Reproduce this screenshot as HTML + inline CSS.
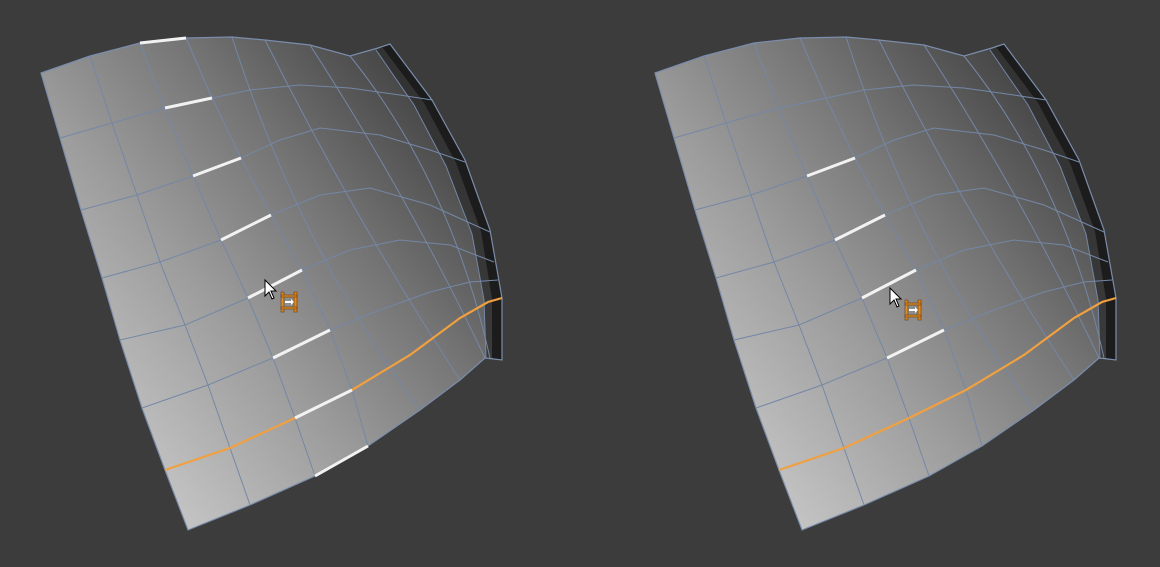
<!DOCTYPE html>
<html><head><meta charset="utf-8"><style>
html,body{margin:0;padding:0;background:#3c3c3c;width:1160px;height:567px;overflow:hidden}
svg{display:block}
</style></head><body>
<svg width="1160" height="567" viewBox="0 0 1160 567" xmlns="http://www.w3.org/2000/svg">
<defs>
<linearGradient id="g" gradientUnits="userSpaceOnUse" x1="100" y1="430" x2="470" y2="110">
<stop offset="0" stop-color="#c4c4c4"/><stop offset="0.35" stop-color="#9c9c9c"/><stop offset="0.65" stop-color="#747474"/><stop offset="0.85" stop-color="#555"/><stop offset="1" stop-color="#3e3e3e"/></linearGradient>
<g id="mesh">
<path d="M41,73 L90,56 L140,43 L186,38 L232,37 L265,40 L310,45 L350,56 L378,48 L390,44 L432,100 L465,160 L490,230 L502,298 L502,360 L485,358 L460,380 L420,410 L368,446 L315,476 L250,505 L188,530 L165,470 L142,408 L120,340 L102,278 L81,210 L60,138 Z" fill="url(#g)"/>
<path d="M382,47 L390,44 L432,100 L465,160 L490,230 L502,298 L502,360 L492,358 L492,300 L481,232 L456,163 L424,103 Z" fill="#1c1c1c"/>
<path d="M382,47 L424,103 L456,163 L481,232 L492,300 L492,358 L486,358 L484,300 L472,234 L446,166 L414,105 L376,50 Z" fill="#2e2e2e" opacity="0.8"/>
<g fill="none" stroke="#7487a6" stroke-width="1">
<path d="M90,56 L112,123 L137,195 L160,262 L185,325 L208,385 L230,448 L250,505"/>
<path d="M140,43 L165,108 L193,176 L221,240 L248,298 L273,358 L295,418 L315,476"/>
<path d="M186,38 L212,98 L241,158 L271,215 L302,270 L330,330 L352,390 L368,446"/>
<path d="M232,37 Q300,250 420,410"/>
<path d="M265,40 Q355,220 460,380"/>
<path d="M310,45 Q410,200 485,358"/>
<path d="M350,56 Q450,180 490,358"/>
<path d="M376,50 L414,105 L446,166 L472,234 L484,300 L486,358"/>
<path d="M60,138 L112,123 L165,108 L212,98 L250,90 L300,85 L350,88 L400,95 L432,100"/>
<path d="M81,210 L137,195 L193,176 L241,158 L280,140 L320,128 L380,135 L430,150 L465,162"/>
<path d="M102,278 L160,262 L221,240 L271,215 L320,195 L370,188 L430,205 L490,232"/>
<path d="M120,340 L185,325 L248,298 L302,270 L350,250 L400,240 L450,245 L494,262"/>
<path d="M142,408 L208,385 L273,358 L330,330 L380,310 L430,292 L470,282 L498,280"/>
</g>
<path d="M41,73 L90,56 L140,43 L186,38 L232,37 L265,40 L310,45 L350,56 L378,48 L390,44 L432,100 L465,160 L490,230 L502,298 L502,360 L485,358 L460,380 L420,410 L368,446 L315,476 L250,505 L188,530 L165,470 L142,408 L120,340 L102,278 L81,210 L60,138 Z" fill="none" stroke="#7a8dab" stroke-width="1.2"/>
<path d="M165,470 L230,448 L295,418 L352,390 L410,355 L460,318 L488,302 L502,298" fill="none" stroke="#f0a040" stroke-width="2.2"/>
<g stroke="#f2f2f2" stroke-width="3">
<line x1="193" y1="176" x2="241" y2="158"/>
<line x1="221" y1="240" x2="271" y2="215"/>
<line x1="248" y1="298" x2="302" y2="270"/>
<line x1="273" y1="358" x2="330" y2="330"/>
</g>
</g>
<g id="icon">
<g fill="#e08a22" stroke="#6a3a08" stroke-width="0.6">
<rect x="1" y="0" width="3" height="20"/><rect x="14" y="0" width="3" height="20"/>
<rect x="1" y="3" width="16" height="2"/><rect x="1" y="15" width="16" height="2"/>
</g>
<path d="M5,9 L11,9 L11,7 L14,10 L11,13 L11,11 L5,11 Z" fill="#fff"/>
</g>
<g id="cur"><path d="M0,0 L0,16 L4,12 L7,19 L9,18 L6,11 L11,11 Z" fill="#fff" stroke="#000" stroke-width="1"/></g>
</defs>
<rect width="1160" height="567" fill="#3c3c3c"/>
<use href="#mesh"/>
<g stroke="#f2f2f2" stroke-width="3">
<line x1="140" y1="43" x2="186" y2="38"/>
<line x1="165" y1="108" x2="212" y2="98"/>
<line x1="295" y1="418" x2="352" y2="390"/>
<line x1="315" y1="476" x2="368" y2="446"/>
</g>
<use href="#mesh" transform="translate(614,0)"/>
<use href="#icon" transform="translate(280,292)"/>
<use href="#cur" transform="translate(265,280)"/>
<use href="#icon" transform="translate(904,300)"/>
<use href="#cur" transform="translate(890,288)"/>
</svg>
</body></html>
